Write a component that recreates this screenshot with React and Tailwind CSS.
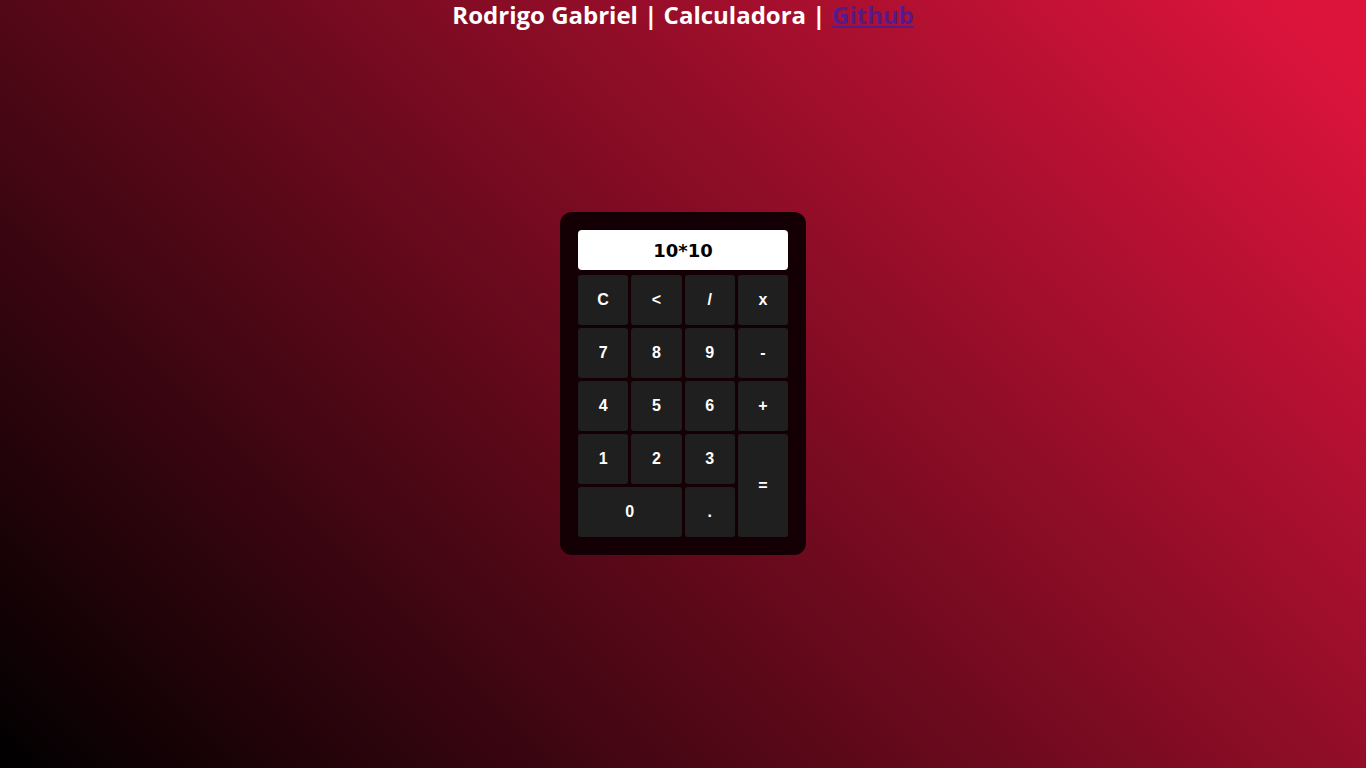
export default function App() {
  const keys = [
    { label: 'C' }, { label: '<' }, { label: '/' }, { label: 'x' },
    { label: '7' }, { label: '8' }, { label: '9' }, { label: '-' },
    { label: '4' }, { label: '5' }, { label: '6' }, { label: '+' },
    { label: '1' }, { label: '2' }, { label: '3' },
    { label: '=', cls: 'row-span-2' },
    { label: '0', cls: 'col-span-2' }, { label: '.' },
  ];

  return (
    <div className="min-h-screen w-full bg-[linear-gradient(45deg,#000000_0%,#dc143c_96%)] flex flex-col items-center">
      <h1 className="text-[24px] leading-[30px] font-bold text-white text-center font-['Trebuchet_MS','Open_Sans',sans-serif]">
        Rodrigo Gabriel | Calculadora | <a href="#" className="text-[#551a8b] underline">Github</a>
      </h1>

      <div className="mt-[182px] w-[246px] rounded-[12px] bg-[#140004] p-[18px]">
        <div className="h-[40px] rounded-[4px] bg-white flex items-center justify-center text-[18px] font-bold text-black font-['Verdana','DejaVu_Sans',sans-serif]">
          10*10
        </div>
        <div className="mt-[5px] grid grid-cols-4 auto-rows-[50px] gap-[3px]">
          {keys.map(k => (
            <button key={k.label}
              className={`${k.cls || ''} rounded-[3px] bg-[#1f1f1f] text-white text-[16px] font-bold font-['Arial','Liberation_Sans',sans-serif] flex items-center justify-center`}>
              {k.label}
            </button>
          ))}
        </div>
      </div>
    </div>
  );
}
